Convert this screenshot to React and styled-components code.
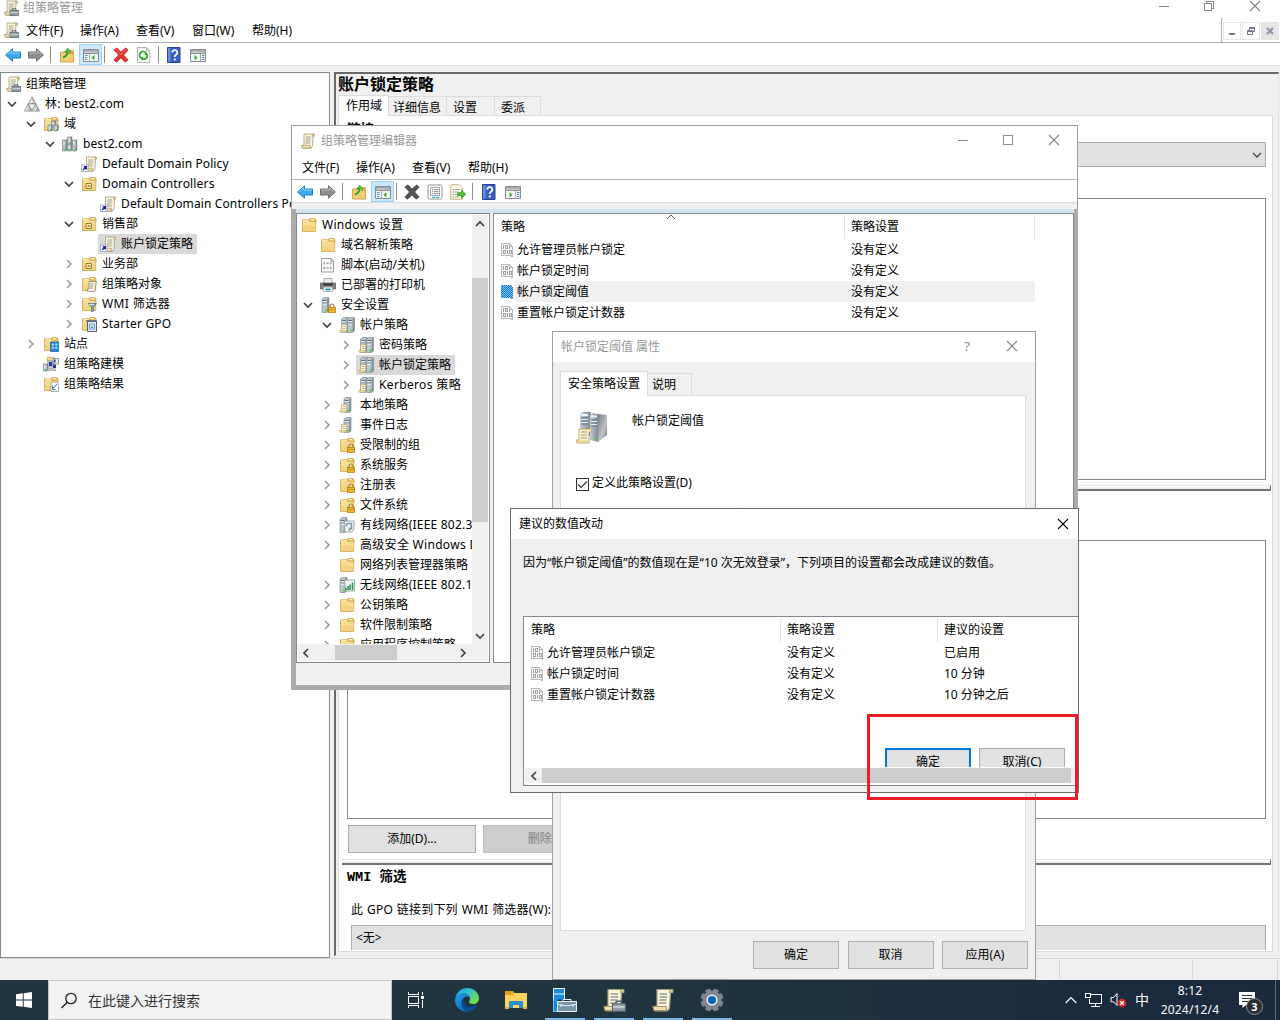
import React from "react";
import styled, { createGlobalStyle } from "styled-components";

/* ---------- icon drawings, all on a 16 x 16 grid ---------- */

const folder = (
  <>
    <path d="M7.500 3.500L9 1.500h5l1 1.200v3H7.500z" fill="#ecc266" stroke="#c99a3c" strokeWidth=".7" />
    <path d="M10 2.700h3" stroke="#fff8e0" strokeWidth="1.200" />
    <path d="M1.500 2.800h6.300l1.200 1.500h5.700v10.200H1.500z" fill="#f7dd93" stroke="#d2a548" strokeWidth=".8" />
    <path d="M2 9h12.200v5H2z" fill="#f1cf78" opacity=".7" />
    <path d="M2 3.600h5.600" stroke="#fff3c8" strokeWidth=".8" />
  </>
);

const scroll = (
  <>
    <path d="M4 1h9.500l-.5 2.500-.7 10-1.300 1.700H3V12h1z" fill="#fcf6dc" stroke="#a89c7c" strokeWidth=".8" />
    <path d="M1.300 12.300h8.700l.5 2.700H2z" fill="#efe0ae" stroke="#a3956e" strokeWidth=".7" />
    <path d="M12.500 1h2.200v2.200h-2.500z" fill="#dcc68a" stroke="#a3956e" strokeWidth=".5" />
    <path d="M5.800 4h5M5.800 6h5M5.500 8h4.800M5.300 10h5" stroke="#97978f" strokeWidth=".9" />
  </>
);

const tower = (x, y, h) => (
  <g key={`${x}-${y}`}>
    <path d={`M${x} ${y + 1}h3.500v${h - 1}h-3.500z`} fill="#b4bec6" stroke="#6c7780" strokeWidth=".6" />
    <path d={`M${x + 3.5} ${y + 1}l1.200-1v${h - 1}l-1.200 1z`} fill="#7b868f" />
    <path d={`M${x + 0.5} ${y + 3}h2.500M${x + 0.5} ${y + 5}h2.500`} stroke="#f3f8fb" strokeWidth=".9" />
    <rect x={x + 2} y={y + h - 2} width="1.500" height="1.500" fill="#43d12f" />
  </g>
);

const bigServer = (x) => (
  <>
    <path d={`M${x} 2l2-1.500h5v13.500l-2 1.500h-5z`} fill="#bac4cb" stroke="#7a858d" strokeWidth=".6" />
    <path d={`M${x + 5} 2l2-1.500v13.500l-2 1.500z`} fill="#89949c" />
    <path d={`M${x + 0.8} 3.500h3.700M${x + 0.8} 6h3.700`} stroke="#50636f" strokeWidth=".9" />
    <path d={`M${x + 0.8} 4.700h3.700M${x + 0.8} 7.200h3.700`} stroke="#f6fafc" strokeWidth="1" />
    <rect x={x + 3.2} y="12.700" width="1.800" height="1.800" fill="#49cf28" />
  </>
);

const smallScroll = (
  <>
    <path d="M2.500 7.500h5.500l-.5 7.500H1.500v-2h1z" fill="#fdf5d8" stroke="#b5a16c" strokeWidth=".7" />
    <path d="M3.700 9.500h2.800M3.700 11.500h2.800" stroke="#a8a08a" strokeWidth=".8" />
    <path d="M.8 13.500h6V15.300H.8z" fill="#ecd595" stroke="#b5a16c" strokeWidth=".4" />
  </>
);

const lock = (
  <>
    <path d="M10 10.500V9a2 2 0 0 1 4 0v1.500" fill="none" stroke="#9c8240" strokeWidth="1.200" />
    <rect x="8.500" y="10.300" width="7" height="5.200" fill="#efb429" stroke="#ab7a10" strokeWidth=".7" />
    <path d="M9 12.500h6" stroke="#b98519" strokeWidth=".7" />
  </>
);

const arrow = (
  <path d="M.6 8L7.500 1.800V5h8v6h-8v3.200z" strokeWidth="1" />
);

const briefcase = (
  <>
    <path d="M9.500 10.200V8.800h3.500v1.400" fill="none" stroke="#555f6b" />
    <path d="M7 10.500h8.600v5H7z" fill="#929ca6" stroke="#56606a" strokeWidth=".7" />
    <path d="M7.300 12.600h8" stroke="#d8dee5" strokeWidth=".9" />
  </>
);

const consoleWindow = (
  <>
    <path d="M.5 2.500h15v12H.5z" fill="#f5f7f8" stroke="#858b91" />
    <path d="M1 3h14v2.500H1z" fill="#8f969d" />
    <path d="M1.500 4.200h9" stroke="#c9ced3" />
    <path d="M11.500 4h1M13.500 4h1" stroke="#fff" />
    <path d="M1 6.500h14" stroke="#8c9298" />
  </>
);

const glyphs = {
  folder,
  scroll,
  gpm: (
    <>
      {scroll}
      {briefcase}
    </>
  ),
  forest: (
    <>
      <path d="M8 .8l3.700 6.700H4.300z" fill="#d3d5d6" stroke="#777" strokeWidth=".8" />
      <path d="M4.200 8l3.700 7H.4zM11.800 8l3.700 7H8.200z" fill="#bfc2c2" stroke="#777" strokeWidth=".8" />
      <path d="M4.700 8h6.600L8 14z" fill="#f5f5f5" stroke="#888" strokeWidth=".6" />
      <path d="M8 1v6.500H4.300zM4.200 8v7H.4zM11.800 8v7H8.200z" fill="#fff" opacity=".45" />
    </>
  ),
  folderServers: (
    <>
      {folder}
      {tower(8.5, 4, 7)}
      {tower(5, 8, 7)}
      {tower(11, 8, 7)}
    </>
  ),
  domain: (
    <>
      {tower(5.5, 0, 9)}
      {tower(0.5, 3, 12)}
      {tower(10.5, 3, 12)}
      {tower(5.5, 7, 8)}
    </>
  ),
  gpoLink: (
    <>
      <g transform="translate(1.500 0)">{scroll}</g>
      <rect x=".5" y="9" width="6.500" height="6.500" fill="#fff" stroke="#9b9bbf" strokeWidth=".8" />
      <path d="M2 14l3-3M2.700 10.800H5.300V13.400" fill="none" stroke="#20209b" strokeWidth="1.400" />
    </>
  ),
  ou: (
    <>
      {folder}
      <path d="M5 7.500h5.500v5H5z" fill="#fff2c2" stroke="#a37c25" />
      <path d="M6.500 10h3" stroke="#a37c25" strokeWidth="1.500" />
    </>
  ),
  folderScroll: (
    <>
      {folder}
      <path d="M8 5.500h7.300L14 14.500l-1 1H6.500V13H8z" fill="#fcf5db" stroke="#928568" strokeWidth=".8" />
      <path d="M9 8h3.500M9 10h3.500M9 12h3" stroke="#8d8d86" strokeWidth=".8" />
    </>
  ),
  folderFunnel: (
    <>
      {folder}
      <path d="M7 7.500h8.500L12.600 11v4l-2 .8V11z" fill="#91a6b8" stroke="#51687b" strokeWidth=".8" />
      <path d="M8 8.300h5" stroke="#e9f2f8" />
    </>
  ),
  folderStarter: (
    <>
      {folder}
      <path d="M6.500 5.500h9v10h-9z" fill="#dcebf4" stroke="#54656f" />
      <path d="M5 4.700h10.800" stroke="#69757e" strokeWidth="1.500" />
      <path d="M8.500 8h5v5h-5z" fill="#fff" stroke="#4489b5" strokeWidth=".8" />
      <path d="M9.500 10h3M9.500 11.500h3" stroke="#397eab" strokeWidth=".8" />
    </>
  ),
  folderSites: (
    <>
      {folder}
      <path d="M7.500 6h8v9.500h-8z" fill="#2583cb" stroke="#0e5c9b" strokeWidth=".7" />
      <path d="M8.700 7.500h2.300v2H8.700zM12.200 7.500h2.300v2h-2.300zM8.700 10.700h2.300v2H8.700zM12.200 10.700h2.300v2h-2.300z" fill="#a9ddff" />
    </>
  ),
  modelling: (
    <>
      <path d="M4 1.500h7v4H4z" fill="#f2d57e" stroke="#a78a3a" strokeWidth=".5" />
      {tower(0.5, 7, 8)}
      <path d="M5 5h5v6H5zM10 2.500h5.500v5.500H10z" fill="#e8ebee" stroke="#7a8187" strokeWidth=".8" />
      <path d="M6 6h3v4H6zM11 3.500h1.500v3H11zM10 8.500h3v3.500h-3z" fill="#2634a9" />
      <path d="M4 12.500h8l1 2H5z" fill="#bfc7cd" stroke="#79828a" strokeWidth=".5" />
    </>
  ),
  results: (
    <>
      {folder}
      <path d="M8 6h5.500l2 2v7.500H8z" fill="#fff" stroke="#8d989f" strokeWidth=".8" />
      <path d="M9.500 10.500v3h3M14 8l-3.500 4M9.500 9.500v2h2" stroke="#2484c8" fill="none" />
    </>
  ),
  script: (
    <>
      <path d="M1.500 1.500h9.500l2.500 2.500v11h-12z" fill="#fafafa" stroke="#9a9a9a" />
      <path d="M11 1.500v2.700h2.500" fill="none" stroke="#9a9a9a" />
      <path d="M5 5L3.500 6.200 5 7.400M5 9.800L3.500 11 5 12.200M10 5l1.500 1.200L10 7.400M10 9.800l1.500 1.200-1.500 1.200M6.300 6.200h2.500M6.300 11h2.500" fill="none" stroke="#777" strokeWidth=".9" />
    </>
  ),
  printer: (
    <>
      <path d="M4 1.500h8v5H4z" fill="#e8f0f4" stroke="#949b9e" strokeWidth=".8" />
      <path d="M.5 6h15v6H.5z" fill="#85898b" stroke="#5a5e60" strokeWidth=".8" />
      <path d="M3 7.500h10" stroke="#303436" strokeWidth="2" />
      <path d="M3.500 10h9v4.500h-9z" fill="#eef5f6" stroke="#929b9f" strokeWidth=".7" />
      <path d="M5.500 12.500h5" stroke="#2496ac" strokeWidth="2" />
    </>
  ),
  serverLock: (
    <>
      {bigServer(2)}
      {lock}
    </>
  ),
  servers: (
    <>
      {bigServer(2.5)}
      {bigServer(8.5)}
      {smallScroll}
    </>
  ),
  server: (
    <>
      {bigServer(5)}
      {smallScroll}
    </>
  ),
  folderLock: (
    <>
      {folder}
      {lock}
    </>
  ),
  wired: (
    <>
      {bigServer(1)}
      <path d="M5.500 4h10l-1 9-1.500 2H6z" fill="#f4f7f9" stroke="#87939d" strokeWidth=".8" />
      <path d="M7.500 6.500h5v5h-2V14M7.500 6.500v3" fill="none" stroke="#7b96a9" strokeWidth="1.500" />
    </>
  ),
  wireless: (
    <>
      {bigServer(1)}
      <path d="M5.500 3h10v11h-9z" fill="#eff5f1" stroke="#8b9692" strokeWidth=".8" />
      <path d="M7 13v-2M9 13v-4M11 13V7.500M13.500 13V5.500" stroke="#229251" strokeWidth="1.500" />
    </>
  ),
  binary: (
    <g shapeRendering="crispEdges">
      <path d="M1.500 1.500h8l3 3v10h-1v-1h-10z" fill="#fafafa" stroke="#b8b8b8" />
      <path d="M9.500 1.500v3h3" fill="none" stroke="#b8b8b8" />
      <path d="M3.500 3v4M5.500 3.500h2v3h-2zM3.500 8.500h2v3h-2zM7.500 8v4M9.500 8.500h2v3h-2zM9.500 5v2" fill="none" stroke="#a0a0a0" />
    </g>
  ),
  binarySelected: (
    <g shapeRendering="crispEdges">
      <defs>
        <pattern id="dither" width="2" height="2" patternUnits="userSpaceOnUse">
          <rect width="2" height="2" fill="#0b77cf" />
          <rect width="1" height="1" fill="#86c1ee" />
          <rect x="1" y="1" width="1" height="1" fill="#86c1ee" />
        </pattern>
      </defs>
      <path d="M1 1h9l3 3v11h-2l-1-1H1z" fill="url(#dither)" />
    </g>
  ),
  back: (
    <g fill="#3cabed" stroke="#1f83c4">
      {arrow}
      <path d="M2.600 7.500L6.500 4v2h8" stroke="#8dd5fc" fill="none" />
    </g>
  ),
  forward: (
    <g transform="translate(16 0) scale(-1 1)" fill="#8f8f8f" stroke="#6c6c6c">
      {arrow}
      <path d="M2.600 7.500L6.500 4v2h8" stroke="#bdbdbd" fill="none" />
    </g>
  ),
  folderUp: (
    <>
      <path d="M1.500 5h6l1 1.500h6v8.500h-13z" fill="#f0ce76" stroke="#c9973d" strokeWidth=".8" />
      <path d="M10.500 3.500h4v3h-4z" fill="#e3b65a" stroke="#c9973d" strokeWidth=".6" />
      <path d="M3.800 10.500c3.500-1 4.700-3.500 4.700-6" fill="none" stroke="#37a528" strokeWidth="2" />
      <path d="M5.500 5L8.800 1.200 12 5z" fill="#50c337" stroke="#2f8f21" strokeWidth=".6" />
    </>
  ),
  treeWindow: (
    <>
      {consoleWindow}
      <path d="M6.500 7v7.500" stroke="#aaa" />
      <path d="M2 8.500h2.500M2 10.500h2.500M2 12.500h2.500" stroke="#4894ca" />
      <path d="M11.500 8v5.500L8.300 10.700z" fill="#45ad32" />
    </>
  ),
  actionWindow: (
    <>
      {consoleWindow}
      <path d="M10.500 7v7.500" stroke="#aaa" />
      <path d="M12 8.500h2.500M12 10.500h2.500M12 12.500h2.500" stroke="#4894ca" />
      <path d="M4.500 8v5.500l3.200-2.800z" fill="#45ad32" />
    </>
  ),
  redX: (
    <>
      <path d="M.8 3L4 .8l4 4.200L12.800.8 15.200 3l-4.500 5 4.500 5-3.200 2.300-4-4.300L3.500 15.300.8 13l4.700-5z" fill="#e03333" stroke="#b92222" strokeWidth=".6" />
      <path d="M3 2.500l5 5 4.500-5" stroke="#f27b77" fill="none" strokeWidth=".8" />
    </>
  ),
  darkX: <path d="M.8 3L4 .8l4 4.200L12.800.8 15.200 3l-4.500 5 4.500 5-3.200 2.300-4-4.300L3.500 15.300.8 13l4.700-5z" fill="#545454" stroke="#3c3c3c" strokeWidth=".6" />,
  refresh: (
    <>
      <path d="M1.500.5h9.300l3 3v12H1.500z" fill="#fafafa" stroke="#b4b4b4" />
      <path d="M10.500.5v3.300h3.300" fill="none" stroke="#b4b4b4" />
      <path d="M4.500 10.500A3.500 3.500 0 0 1 9.800 5.800M11 7.500a3.500 3.500 0 0 1-5.300 4" fill="none" stroke="#34a827" strokeWidth="1.800" />
      <path d="M9.500 4.500l2.800 3.500H8.500zM6.300 13.800L3.200 10H7z" fill="#34a827" />
    </>
  ),
  properties: (
    <>
      <rect x="1" y="1" width="14" height="14" rx="1.500" fill="#fff" stroke="#909090" />
      <path d="M3.500 3.500h9v8h-9z" fill="#f3f7fa" stroke="#9eaab3" />
      <path d="M5 5.500h1M5 7.500h1M5 9.500h1M7 5.500h4.500M7 7.500h4.500M7 9.500h4.500" stroke="#888" strokeWidth=".9" />
      <path d="M5 13.300h3M9 13.300h3" stroke="#39a8dc" strokeWidth="1.300" />
    </>
  ),
  exportList: (
    <>
      <path d="M.8.8h8.500l3 3v11.500H.8z" fill="#fff9e6" stroke="#c4b283" />
      <path d="M2.700 5.500h1M2.700 8h1M2.700 10.500h1M2.700 13h1" stroke="#555" />
      <path d="M4.700 5.500h5M4.700 8h3M4.700 10.500h2M4.700 13h4" stroke="#8ca0b2" />
      <path d="M7.500 8.700h4V6l4.300 4.200-4.300 4.200v-2.700h-4z" fill="#55c13e" stroke="#2b8c1b" strokeWidth=".7" />
    </>
  ),
  help: (
    <>
      <path d="M1.500.5h12.500v15H1.500z" fill="#3a5fc2" stroke="#24429a" />
      <path d="M2 1h2.500v14H2z" fill="#6a8de0" />
      <path d="M6.300 5.500a2.500 2.500 0 1 1 3.700 2.200q-1.300.8-1.300 2.300" fill="none" stroke="#fff" strokeWidth="1.700" />
      <rect x="7.800" y="11.500" width="1.900" height="1.900" fill="#fff" />
    </>
  ),
};

const StyledSvg = styled.svg`
  display: block;
  flex: none;
`;

function Icon({ name }) {
  return (
    <StyledSvg width="16" height="16" viewBox="0 0 16 16">
      {glyphs[name]}
    </StyledSvg>
  );
}

function Chevron({ dir, color = "#404040", width = 1.7 }) {
  const paths = {
    down: "M1 3l4 4 4-4",
    up: "M1 7l4-4 4 4",
    right: "M3 1l4 4-4 4",
    left: "M7 1L3 5l4 4",
  };
  return (
    <StyledSvg width="10" height="10" viewBox="0 0 10 10">
      <path d={paths[dir]} fill="none" stroke={color} strokeWidth={width} />
    </StyledSvg>
  );
}

function CloseMark({ color = "#888" }) {
  return (
    <StyledSvg width="12" height="12" viewBox="0 0 12 12">
      <path d="M1 1l10 10M11 1L1 11" stroke={color} strokeWidth="1.100" />
    </StyledSvg>
  );
}

function MinMark() {
  return (
    <StyledSvg width="10" height="11" viewBox="0 0 10 11" shapeRendering="crispEdges">
      <path d="M0 5.500h10" stroke="#888" />
    </StyledSvg>
  );
}

function MaxMark() {
  return (
    <StyledSvg width="10" height="10" viewBox="0 0 10 10" shapeRendering="crispEdges">
      <path d="M.5.5h9v9h-9z" fill="none" stroke="#888" />
    </StyledSvg>
  );
}

function RestoreMark() {
  return (
    <StyledSvg width="10" height="10" viewBox="0 0 10 10" shapeRendering="crispEdges">
      <path d="M.5 2.500h7v7h-7zM2.500 2.500v-2h7v7h-2" fill="none" stroke="#888" />
    </StyledSvg>
  );
}

/* ---------- data ---------- */

const mainTree = [
  { depth: 0, icon: "gpm", label: "组策略管理" },
  { depth: 1, icon: "forest", label: "林: best2.com", open: true, spacing: 0.2 },
  { depth: 2, icon: "folderServers", label: "域", open: true },
  { depth: 3, icon: "domain", label: "best2.com", open: true, spacing: 0.1 },
  { depth: 4, icon: "gpoLink", label: "Default Domain Policy", spacing: 0.1 },
  { depth: 4, icon: "ou", label: "Domain Controllers", open: true, spacing: 0.15 },
  { depth: 5, icon: "gpoLink", label: "Default Domain Controllers Policy", spacing: 0.12 },
  { depth: 4, icon: "ou", label: "销售部", open: true },
  { depth: 5, icon: "gpoLink", label: "账户锁定策略", selected: true },
  { depth: 4, icon: "ou", label: "业务部", open: false },
  { depth: 4, icon: "folderScroll", label: "组策略对象", open: false },
  { depth: 4, icon: "folderFunnel", label: "WMI 筛选器", open: false, spacing: 0.4 },
  { depth: 4, icon: "folderStarter", label: "Starter GPO", open: false, spacing: 0.2 },
  { depth: 2, icon: "folderSites", label: "站点", open: false },
  { depth: 2, icon: "modelling", label: "组策略建模" },
  { depth: 2, icon: "results", label: "组策略结果" },
];

const editorTree = [
  { depth: 0, icon: "folder", label: "Windows 设置", spacing: 0.3 },
  { depth: 1, icon: "folder", label: "域名解析策略" },
  { depth: 1, icon: "script", label: "脚本(启动/关机)" },
  { depth: 1, icon: "printer", label: "已部署的打印机" },
  { depth: 1, icon: "serverLock", label: "安全设置", open: true },
  { depth: 2, icon: "servers", label: "帐户策略", open: true },
  { depth: 3, icon: "servers", label: "密码策略", open: false },
  { depth: 3, icon: "servers", label: "帐户锁定策略", open: false, selected: true },
  { depth: 3, icon: "servers", label: "Kerberos 策略", open: false, spacing: 0.35 },
  { depth: 2, icon: "server", label: "本地策略", open: false },
  { depth: 2, icon: "server", label: "事件日志", open: false },
  { depth: 2, icon: "folderLock", label: "受限制的组", open: false },
  { depth: 2, icon: "folderLock", label: "系统服务", open: false },
  { depth: 2, icon: "folderLock", label: "注册表", open: false },
  { depth: 2, icon: "folderLock", label: "文件系统", open: false },
  { depth: 2, icon: "wired", label: "有线网络(IEEE 802.3)策略", open: false, spacing: 0.2 },
  { depth: 2, icon: "folder", label: "高级安全 Windows Defender", open: false, spacing: 0.3 },
  { depth: 2, icon: "folder", label: "网络列表管理器策略" },
  { depth: 2, icon: "wireless", label: "无线网络(IEEE 802.11)策略", open: false, spacing: 0.2 },
  { depth: 2, icon: "folder", label: "公钥策略", open: false },
  { depth: 2, icon: "folder", label: "软件限制策略", open: false },
  { depth: 2, icon: "folder", label: "应用程序控制策略", open: false },
];

const mainTools = [
  { icon: "back" },
  { icon: "forward", gap: 7 },
  { sep: true, gap: 6 },
  { icon: "folderUp", gap: 8 },
  { icon: "treeWindow", gap: 4, pressed: true },
  { sep: true, gap: 2 },
  { icon: "redX", gap: 8 },
  { icon: "refresh", gap: 7 },
  { sep: true, gap: 6 },
  { icon: "help", gap: 7 },
  { icon: "actionWindow", gap: 8 },
];

const editorTools = [
  { icon: "back" },
  { icon: "forward", gap: 7 },
  { sep: true, gap: 6 },
  { icon: "folderUp", gap: 8 },
  { icon: "treeWindow", gap: 4, pressed: true },
  { sep: true, gap: 2 },
  { icon: "darkX", gap: 7 },
  { icon: "properties", gap: 7 },
  { icon: "exportList", gap: 7 },
  { sep: true, gap: 6 },
  { icon: "help", gap: 8 },
  { icon: "actionWindow", gap: 8 },
];

const policies = [
  { name: "允许管理员帐户锁定", value: "没有定义" },
  { name: "帐户锁定时间", value: "没有定义" },
  { name: "帐户锁定阈值", value: "没有定义", selected: true },
  { name: "重置帐户锁定计数器", value: "没有定义" },
];

const suggestions = [
  { name: "允许管理员帐户锁定", value: "没有定义", next: "已启用" },
  { name: "帐户锁定时间", value: "没有定义", next: "10 分钟" },
  { name: "重置帐户锁定计数器", value: "没有定义", next: "10 分钟之后" },
];

/* ---------- shared pieces ---------- */

function Toolbar({ tools, indent }) {
  return (
    <ToolbarRow $indent={indent}>
      {tools.map((t, i) =>
        t.sep ? (
          <ToolSeparator key={i} $gap={t.gap} />
        ) : (
          <Tool key={i} $gap={t.gap} $pressed={t.pressed}>
            <Icon name={t.icon} />
          </Tool>
        )
      )}
    </ToolbarRow>
  );
}

function Tree({ items }) {
  return items.map((item) => (
    <TreeRow key={item.label} $depth={item.depth}>
      {item.open !== undefined && (
        <Toggle>
          <Chevron
            dir={item.open ? "down" : "right"}
            color={item.open ? "#404040" : "#a0a0a0"}
          />
        </Toggle>
      )}
      <TreeItem $selected={item.selected} $spacing={item.spacing}>
        <Icon name={item.icon} />
        {item.label}
      </TreeItem>
    </TreeRow>
  ));
}

function MainWindow() {
  return (
    <Main>
      <MainTitle>
        <Icon name="gpm" />
        <MainTitleText>组策略管理</MainTitleText>
        <MainControls>
          <MinMark />
          <RestoreMark />
          <CloseMark />
        </MainControls>
      </MainTitle>
      <MainMenu>
        <Icon name="gpm" />
        <MenuItems>
          <MenuItem $w={54}>文件(F)</MenuItem>
          <MenuItem $w={56}>操作(A)</MenuItem>
          <MenuItem $w={56}>查看(V)</MenuItem>
          <MenuItem $w={60}>窗口(W)</MenuItem>
          <MenuItem>帮助(H)</MenuItem>
        </MenuItems>
        <MdiButtons>
          <MdiButton>
            <StyledSvg width="8" height="8" viewBox="0 0 8 8">
              <path d="M1 7h6" stroke="#747d8e" strokeWidth="2" />
            </StyledSvg>
          </MdiButton>
          <MdiButton>
            <StyledSvg width="8" height="8" viewBox="0 0 8 8" shapeRendering="crispEdges">
              <path d="M2.500 2.500V.5h5v4h-2M.5 3.500h5v4h-5z" fill="none" stroke="#747d8e" />
              <path d="M2 1h6M0 4h6" stroke="#747d8e" strokeWidth="2" />
            </StyledSvg>
          </MdiButton>
          <MdiButton $flat>
            <StyledSvg width="8" height="8" viewBox="0 0 8 8">
              <path d="M1 1l6 6M7 1L1 7" stroke="#8d93a8" strokeWidth="2.200" />
            </StyledSvg>
          </MdiButton>
        </MdiButtons>
      </MainMenu>
      <Toolbar tools={mainTools} indent={5} />
      <MainBody>
        <MainTreePane>
          <Tree items={mainTree} />
        </MainTreePane>
        <GpoPane>
          <GpoTitle>账户锁定策略</GpoTitle>
          <TabStrip>
            <Tab $active $w={51}>作用域</Tab>
            <Tab $w={58} $pad={4}>详细信息</Tab>
            <Tab $w={48} $pad={6}>设置</Tab>
            <Tab $w={46} $pad={6}>委派</Tab>
          </TabStrip>
          <GpoPanel>
            <SectionTitle $h={26}>链接</SectionTitle>
            <Combo>
              <Chevron dir="down" width={1.3} />
            </Combo>
            <ListBox $top={31} $h={282} />
            <Splitter $top={5} />
            <ListBox $top={49} $h={279} />
            <ButtonRow>
              <Button $w={128}>添加(D)...</Button>
              <Button $w={128} $disabled>删除(R)</Button>
            </ButtonRow>
            <Splitter $top={6} />
            <SectionTitle $h={22} $mono>WMI 筛选</SectionTitle>
            <FilterLabel>此 GPO 链接到下列 WMI 筛选器(W):</FilterLabel>
            <FilterCombo>&lt;无&gt;</FilterCombo>
          </GpoPanel>
        </GpoPane>
      </MainBody>
      <StatusBar>
        <StatusCell $w={1060} />
        <StatusCell $w={133} />
        <StatusCell $w={85} />
      </StatusBar>
    </Main>
  );
}

function EditorWindow() {
  return (
    <Editor>
      <EditorTitle>
        <Icon name="scroll" />
        <EditorTitleText>组策略管理编辑器</EditorTitleText>
        <EditorControls>
          <MinMark />
          <MaxMark />
          <CloseMark />
        </EditorControls>
      </EditorTitle>
      <EditorMenu>
        <MenuItem $w={54}>文件(F)</MenuItem>
        <MenuItem $w={56}>操作(A)</MenuItem>
        <MenuItem $w={56}>查看(V)</MenuItem>
        <MenuItem>帮助(H)</MenuItem>
      </EditorMenu>
      <Toolbar tools={editorTools} indent={5} />
      <EditorGap />
      <EditorFrame>
        <EditorPanes>
          <EditorTreePane>
            <TreeClip>
              <Tree items={editorTree} />
            </TreeClip>
            <VScroll>
              <Chevron dir="up" />
              <VThumb />
              <Chevron dir="down" />
            </VScroll>
            <HScroll>
              <Chevron dir="left" />
              <HThumb />
              <Chevron dir="right" />
            </HScroll>
          </EditorTreePane>
          <EditorList>
            <ListHead $cols="351px 190px 1fr">
              <HeadCell>
                策略
                <SortMark>
                  <Chevron dir="up" color="#555" width={1} />
                </SortMark>
              </HeadCell>
              <HeadCell>策略设置</HeadCell>
            </ListHead>
            {policies.map((p) => (
              <ListRow key={p.name} $cols="351px 190px 1fr">
                <NameCell>
                  <Icon name={p.selected ? "binarySelected" : "binary"} />
                  <NameText $selected={p.selected}>{p.name}</NameText>
                </NameCell>
                <ValueCell $selected={p.selected}>{p.value}</ValueCell>
              </ListRow>
            ))}
          </EditorList>
        </EditorPanes>
      </EditorFrame>
    </Editor>
  );
}

function PropertiesDialog() {
  return (
    <Properties>
      <DialogTitle $inactive>
        帐户锁定阈值 属性
        <PropertyControls>
          <HelpMark>?</HelpMark>
          <CloseMark />
        </PropertyControls>
      </DialogTitle>
      <PropertyTabs>
        <Tab $active $tall $w={88}>安全策略设置</Tab>
        <Tab $w={44} $pad={4}>说明</Tab>
      </PropertyTabs>
      <PropertyPanel>
        <PolicyHead>
          <StyledSvg width="32" height="32" viewBox="0 0 32 32">
            <defs>
              <linearGradient id="rack" x1="0" x2="1">
                <stop offset="0" stopColor="#c4ccd4" />
                <stop offset="1" stopColor="#7f8992" />
              </linearGradient>
              <linearGradient id="side" x1="0" y1="0" x2="1" y2="1">
                <stop offset="0" stopColor="#777b80" />
                <stop offset=".6" stopColor="#bfc3c7" />
                <stop offset="1" stopColor="#6d7175" />
              </linearGradient>
            </defs>
            <path d="M4 2l3-2h8v24H4z" fill="url(#rack)" />
            <path d="M22 2l9 1v20l-9 7z" fill="url(#side)" />
            <path d="M14 3l3-2 5 1v28l-8-2z" fill="url(#rack)" />
            <path d="M5 3h7M15 4.500h6" stroke="#e9f5ff" strokeWidth="2" />
            <path d="M5 6h7M5 9h7M5 12h7M15 8h6M15 11h6M15 14h6" stroke="#5a7188" strokeWidth="1.200" />
            <path d="M5 7.500h7M5 10.500h7M15 9.500h6M15 12.500h6" stroke="#eef3f8" />
            <path d="M3 17h11l2-1-1 4h-2v11H1l-1-3h3z" fill="#fcf0c5" stroke="#b39b62" strokeWidth=".8" />
            <path d="M5 20h6M5 23h6M5 26h6" stroke="#9b9992" strokeWidth="1" />
            <path d="M.5 28.500h11v2H1z" fill="#e7cf88" />
            <rect x="19" y="26.500" width="2" height="2" fill="#4bd31d" />
          </StyledSvg>
          <PolicyName>帐户锁定阈值</PolicyName>
        </PolicyHead>
        <CheckRow>
          <CheckBox>
            <StyledSvg width="11" height="11" viewBox="0 0 11 11">
              <path d="M1 5.500l3 3 6-6" fill="none" stroke="#333" strokeWidth="1.200" />
            </StyledSvg>
          </CheckBox>
          定义此策略设置(D)
        </CheckRow>
        <LockoutLabel>在发生以下情况之后，锁定帐户:</LockoutLabel>
      </PropertyPanel>
      <PropertyButtons>
        <Button $w={86}>确定</Button>
        <Button $w={86}>取消</Button>
        <Button $w={86}>应用(A)</Button>
      </PropertyButtons>
    </Properties>
  );
}

function SuggestionDialog() {
  const cols = "257px 157px 1fr";
  return (
    <Suggestion>
      <DialogTitle>
        建议的数值改动
        <CloseMark color="#000" />
      </DialogTitle>
      <Message>
        因为“帐户锁定阈值”的数值现在是“10 次无效登录”，下列项目的设置都会改成建议的数值。
      </Message>
      <SuggestionList>
        <ListHead $cols={cols}>
          <HeadCell>策略</HeadCell>
          <HeadCell>策略设置</HeadCell>
          <HeadCell $last>建议的设置</HeadCell>
        </ListHead>
        {suggestions.map((s) => (
          <ListRow key={s.name} $cols={cols}>
            <NameCell>
              <Icon name="binary" />
              <NameText>{s.name}</NameText>
            </NameCell>
            <ValueCell>{s.value}</ValueCell>
            <ValueCell>{s.next}</ValueCell>
          </ListRow>
        ))}
        <SuggestionButtons>
          <Button $w={86} $primary>确定</Button>
          <Button $w={86}>取消(C)</Button>
        </SuggestionButtons>
        <WideScroll>
          <ScrollArrow>
            <Chevron dir="left" />
          </ScrollArrow>
          <WideThumb />
        </WideScroll>
      </SuggestionList>
    </Suggestion>
  );
}

function Taskbar() {
  return (
    <Bar>
      <StartButton>
        <StyledSvg width="16" height="16" viewBox="0 0 16 16">
          <path d="M0 2.200L6.800 1.300v6.300H0zM7.700 1.200L16 0v7.600H7.700zM0 8.500h6.800v6.300L0 13.900zM7.700 8.500H16V16l-8.300-1.200z" fill="#fff" />
        </StyledSvg>
      </StartButton>
      <Search>
        <StyledSvg width="18" height="18" viewBox="0 0 18 18">
          <circle cx="11" cy="6.500" r="5.200" fill="none" stroke="#222" strokeWidth="1.300" />
          <path d="M7.300 10.200L1.500 16" stroke="#222" strokeWidth="1.400" />
        </StyledSvg>
        在此键入进行搜索
      </Search>
      <TaskItem $w={48}>
        <StyledSvg width="18" height="18" viewBox="0 0 18 18" shapeRendering="crispEdges">
          <path d="M1.500 1v2.500h10V1M1.500 17v-2.500h10V17M1.500 5.500h10v7h-10zM15.500 1v3M15.500 9v8" fill="none" stroke="#fff" />
          <path d="M14 5h3v3h-3z" fill="#fff" />
        </StyledSvg>
      </TaskItem>
      <TaskItem $w={53}>
        <StyledSvg width="24" height="24" viewBox="0 0 24 24">
          <defs>
            <linearGradient id="edgeTop" x1="0" y1="0" x2="1" y2=".6">
              <stop offset="0" stopColor="#249ee5" />
              <stop offset=".5" stopColor="#32c2d0" />
              <stop offset="1" stopColor="#70df4c" />
            </linearGradient>
            <linearGradient id="edgeLow" x1="0" y1="0" x2="1" y2="1">
              <stop offset="0" stopColor="#1ba0e8" />
              <stop offset="1" stopColor="#0b5fb8" />
            </linearGradient>
          </defs>
          <path d="M.3 10.500C1.500 3.800 6.500 0 12 0c6.800 0 12 4.700 12 10.300 0 3.500-2.700 5.800-5.900 5.800-2.800 0-4.100-1-4.100-2 0-.8 1-1.300 1-3C15 8 12.400 5.600 8.700 5.600 5 5.600 1.800 7.800.3 10.500z" fill="url(#edgeTop)" />
          <path d="M0 12.500C.2 8.500 3.800 5.600 8.700 5.600c3.700 0 6.300 2.400 6.300 5 0-.8-1.200-2-2.900-2-3.200 0-5.400 3-5.400 6.300 0 4 2.700 7.600 6.400 8.900A12 12 0 0 1 0 12.500z" fill="url(#edgeLow)" />
          <path d="M8.800 10.400c-1.400 3.500 1.400 8.200 6.600 8.200 2.500 0 4.500-.7 6.300-1.700.5-.2.900.2.600.7A12 12 0 0 1 12.800 24C8.700 22.500 6.700 18.600 6.700 15c0-2 .7-3.500 2.100-4.600z" fill="#0a4b98" />
        </StyledSvg>
      </TaskItem>
      <TaskItem $w={46}>
        <StyledSvg width="22" height="20" viewBox="0 0 22 20">
          <path d="M0 1h8l2 2.500H0z" fill="#dc9806" />
          <path d="M0 3h22v15H0z" fill="#ffd45d" />
          <path d="M0 1h8v4H0z" fill="#e1a313" />
          <path d="M4 18v-6q0-1 1-1h12q1 0 1 1v6h-4v-3H8v3z" fill="#288ad4" />
          <path d="M0 17h4v2H0zM18 17h4v2h-4z" fill="#eab638" />
        </StyledSvg>
      </TaskItem>
      <TaskItem $w={52} $running>
        <StyledSvg width="26" height="26" viewBox="0 0 26 26">
          <path d="M1.500 1.500h11v23h-11z" fill="#168bdd" stroke="#f3f9fe" />
          <path d="M2 7h10" stroke="#f3f9fe" />
          <path d="M5.500 12.500h20v12.500h-20z" fill="#20343f" />
          <path d="M1.500 12.500h4v12h-4z" fill="#168bdd" />
          <path d="M11 14.500v-2h8v2" fill="none" stroke="#e0ebf2" />
          <path d="M5.500 14.500h19v10h-19z" fill="#7895a7" stroke="#e9f2f8" />
          <path d="M5.500 17.500q9 2.500 19 0" fill="none" stroke="#e9f2f8" />
          <path d="M9 17v3M21 17v3" stroke="#e9f2f8" />
        </StyledSvg>
      </TaskItem>
      <TaskItem $w={46} $running>
        <StyledSvg width="24" height="24" viewBox="0 0 16 16">{glyphs.gpm}</StyledSvg>
      </TaskItem>
      <TaskItem $w={52} $running>
        <StyledSvg width="24" height="24" viewBox="0 0 16 16">{glyphs.scroll}</StyledSvg>
      </TaskItem>
      <TaskItem $w={46} $running>
        <StyledSvg width="24" height="24" viewBox="0 0 24 24">
          <g fill="#7f8790">
            {[0, 45, 90, 135].map((a) => (
              <path key={a} d="M9.500.5h5l1 5h-7zM8.500 18.500h7l-1 5h-5z" transform={`rotate(${a + 22.5} 12 12)`} />
            ))}
            <circle cx="12" cy="12" r="9.300" />
          </g>
          <circle cx="12" cy="12" r="5.500" fill="#eef4f8" />
          <circle cx="12" cy="12" r="4" fill="#0763bd" />
        </StyledSvg>
      </TaskItem>
      <Tray>
        <StyledSvg width="12" height="8" viewBox="0 0 12 8">
          <path d="M.7 7L6 1.500 11.300 7" fill="none" stroke="#fff" strokeWidth="1.200" />
        </StyledSvg>
        <StyledSvg width="17" height="16" viewBox="0 0 17 16" shapeRendering="crispEdges">
          <path d="M6 2.500h10.500v9h-12M4.500 11.500v-5M10.500 11.500v3M6 14.500h9M.5 1.500h5v4h-5z" fill="none" stroke="#fff" />
        </StyledSvg>
        <StyledSvg width="17" height="16" viewBox="0 0 17 16">
          <path d="M1 5.500h2.500L7 1.500v12L3.500 9.800H1z" fill="none" stroke="#fff" />
          <circle cx="12" cy="11" r="4.300" fill="#dc2729" />
          <path d="M10.300 9.300l3.400 3.400M13.700 9.300l-3.400 3.400" stroke="#fff" strokeWidth="1.300" />
        </StyledSvg>
        <Ime>中</Ime>
        <Clock>
          <span>8:12</span>
          <span>2024/12/4</span>
        </Clock>
        <Notice>
          <StyledSvg width="16" height="16" viewBox="0 0 16 16">
            <path d="M0 0h16v13H7l-3.500 3V13H0z" fill="#fff" />
            <path d="M3 3.500h10M3 6.500h10M3 9.500h7" stroke="#1d2e3f" strokeWidth="1.100" />
          </StyledSvg>
          <Badge>3</Badge>
        </Notice>
        <ShowDesktop />
      </Tray>
    </Bar>
  );
}

export default function App() {
  return (
    <Desktop>
      <GlobalStyle />
      <MainWindow />
      <EditorWindow />
      <PropertiesDialog />
      <SuggestionDialog />
      <RedFrame />
      <Taskbar />
    </Desktop>
  );
}

/* ---------- styles ---------- */

const GlobalStyle = createGlobalStyle`
  * {
    box-sizing: border-box;
  }

  body {
    margin: 0;
    overflow: hidden;
    background: #f0f0f0;
    color: #000;
    font-family: "Noto Sans", "Noto Sans CJK SC", sans-serif;
    font-size: 12px;
    line-height: 20px;
  }
`;

const Desktop = styled.div`
  position: relative;
  width: 1280px;
  height: 1020px;
  overflow: hidden;
  white-space: nowrap;
`;

const Main = styled.div`
  display: flex;
  flex-direction: column;
  height: 980px;
  background: #f0f0f0;
`;

const MainTitle = styled.div`
  display: flex;
  align-items: center;
  height: 18px;
  padding: 0 19px 3px 3px;
  background: #fff;
`;

const MainTitleText = styled.div`
  margin-left: 4px;
  color: #999;
`;

const MainControls = styled.div`
  display: flex;
  align-items: center;
  gap: 35px;
  margin-left: auto;
  padding-bottom: 3px;
`;

const MainMenu = styled.div`
  display: flex;
  align-items: center;
  height: 25px;
  padding-left: 3px;
  background: #fff;
  border-bottom: 1px solid #b0b0b0;
`;

const MenuItems = styled.div`
  display: flex;
  margin-left: 7px;
  padding-top: 2px;
`;

const MenuItem = styled.div`
  width: ${(p) => (p.$w ? `${p.$w}px` : "auto")};
`;

const MdiButtons = styled.div`
  display: flex;
  align-items: center;
  gap: 1px;
  height: 24px;
  margin: 0 1px 0 auto;
  padding: 1px 0 0 1px;
  border-left: 1px solid #b0b0b0;
`;

const MdiButton = styled.div`
  display: flex;
  align-items: center;
  justify-content: center;
  width: 18px;
  height: 18px;
  border: 1px solid #e5e5e5;
  background: ${(p) => (p.$flat ? "#e5e5e5" : "#fff")};
`;

const ToolbarRow = styled.div`
  display: flex;
  align-items: center;
  flex: none;
  height: 23px;
  padding: 1px 0 0 ${(p) => p.$indent}px;
  background: #fff;
  border-bottom: 1px solid #dcdcdc;
`;

const Tool = styled.div`
  display: flex;
  align-items: center;
  justify-content: center;
  width: ${(p) => (p.$pressed ? 23 : 16)}px;
  height: 21px;
  margin-left: ${(p) => p.$gap || 0}px;
  border: ${(p) => (p.$pressed ? "1px solid #99d1ff" : "none")};
  background: ${(p) => (p.$pressed ? "#cce8ff" : "none")};
`;

const ToolSeparator = styled.div`
  width: 1px;
  height: 17px;
  margin-left: ${(p) => p.$gap}px;
  background: #8d8d8d;
`;

const MainBody = styled.div`
  display: flex;
  height: 892px;
  padding: 6px 1px 0 0;
`;

const MainTreePane = styled.div`
  width: 330px;
  height: 886px;
  padding-top: 1px;
  overflow: hidden;
  background: #fff;
  border: 1px solid #828790;
`;

const TreeRow = styled.div`
  display: flex;
  align-items: center;
  height: 20px;
  padding-left: ${(p) => 2 + 19 * p.$depth}px;
`;

const Toggle = styled.div`
  display: flex;
  justify-content: center;
  width: 10px;
  margin: 0 5px 0 -15px;
`;

const TreeItem = styled.div`
  display: flex;
  align-items: center;
  gap: 5px;
  height: 20px;
  padding: 0 4px 0 2px;
  letter-spacing: ${(p) => p.$spacing || 0}px;
  background: ${(p) => (p.$selected ? "#d9d9d9" : "none")};
`;

const GpoPane = styled.div`
  flex: 1;
  height: 884px;
  margin-left: 4px;
  padding: 0 5px 4px 2px;
  background: #f0f0f0;
  border: 1px solid #e3e3e3;
  border-top: 2px solid #696969;
  border-left: 2px solid #696969;
`;

const GpoTitle = styled.div`
  height: 21px;
  font-size: 16px;
  font-weight: 700;
`;

const TabStrip = styled.div`
  display: flex;
  align-items: flex-end;
  height: 20px;
`;

const Tab = styled.div`
  position: relative;
  z-index: ${(p) => (p.$active ? 1 : 0)};
  width: ${(p) => p.$w}px;
  height: ${(p) => (p.$tall ? 25 : p.$active ? 21 : 19)}px;
  margin-bottom: ${(p) => (p.$active ? -1 : 0)}px;
  padding-left: ${(p) => p.$pad || 7}px;
  line-height: ${(p) => (p.$tall ? 23 : p.$active ? 19 : 21)}px;
  background: ${(p) => (p.$active ? "#fff" : "#f0f0f0")};
  border: 1px solid #dcdcdc;
  border-bottom: none;
  border-left-width: ${(p) => (p.$active ? 1 : 0)}px;
`;

const GpoPanel = styled.div`
  display: flex;
  flex-direction: column;
  height: 837px;
  padding: 0 6px 0 8px;
  overflow: hidden;
  background: #fff;
  border: 1px solid #dcdcdc;
`;

const SectionTitle = styled.div`
  flex: none;
  height: ${(p) => p.$h}px;
  padding-top: 3px;
  font-family: ${(p) =>
    p.$mono ? '"Liberation Mono", "Noto Sans CJK SC", monospace' : "inherit"};
  font-size: 13.500px;
  font-weight: 700;
`;

const Combo = styled.div`
  display: flex;
  flex: none;
  align-items: center;
  justify-content: flex-end;
  height: 25px;
  padding-right: 3px;
  background: #e1e1e1;
  border: 1px solid #adadad;
`;

const ListBox = styled.div`
  flex: none;
  height: ${(p) => p.$h}px;
  margin-top: ${(p) => p.$top}px;
  border: 1px solid #828790;
`;

const Splitter = styled.div`
  flex: none;
  height: 6px;
  margin: ${(p) => p.$top}px -5px 0;
  background: linear-gradient(#fff 1px, #f0f0f0 1px);
  border-top: 1px solid #e3e3e3;
  border-right: 1px solid #696969;
  border-bottom: 2px solid #747474;
`;

const ButtonRow = styled.div`
  display: flex;
  gap: 7px;
  margin: 6px 0 0 1px;
`;

const Button = styled.div`
  flex: none;
  width: ${(p) => p.$w}px;
  height: 28px;
  text-align: center;
  line-height: 26px;
  color: ${(p) => (p.$disabled ? "#838383" : "#000")};
  background: ${(p) => (p.$disabled ? "#ccc" : "#e1e1e1")};
  border: 1px solid ${(p) => (p.$disabled ? "#bfbfbf" : "#adadad")};
  ${(p) => p.$primary && "border: 2px solid #0078d7; line-height: 24px;"}
`;

const FilterLabel = styled.div`
  flex: none;
  height: 38px;
  padding: 13px 0 0 4px;
  letter-spacing: 0.200px;
  word-spacing: 0.500px;
`;

const FilterCombo = styled.div`
  flex: none;
  height: 25px;
  margin-left: 4px;
  padding-left: 4px;
  line-height: 24px;
  background: #e1e1e1;
  border: 1px solid #adadad;
  border-bottom: none;
`;

const StatusBar = styled.div`
  display: flex;
  height: 22px;
  padding-top: 1px;
  border-top: 1px solid #d7d7d7;
`;

const StatusCell = styled.div`
  width: ${(p) => p.$w}px;
  height: 19px;
  border-right: 1px solid #d7d7d7;
`;

const Editor = styled.div`
  position: absolute;
  top: 125px;
  left: 291px;
  display: flex;
  flex-direction: column;
  width: 787px;
  height: 565px;
  background: #fff;
  border: 1px solid #a0a0a0;
`;

const EditorTitle = styled.div`
  display: flex;
  align-items: center;
  height: 30px;
  padding: 0 17px 0 8px;
`;

const EditorTitleText = styled.div`
  margin-left: 5px;
  color: #999;
`;

const EditorControls = styled.div`
  display: flex;
  align-items: center;
  gap: 35px;
  margin-left: auto;
  padding-bottom: 2px;
`;

const EditorMenu = styled.div`
  display: flex;
  height: 24px;
  padding: 2px 0 0 10px;
  border-bottom: 1px solid #b0b4bc;
`;

const EditorGap = styled.div`
  height: 6px;
  background: #f0f0f0;
`;

const EditorFrame = styled.div`
  flex: 1;
  margin: 0 -1px -1px;
  padding: 0 4px 5px 5px;
  background: #ababab;
`;

const EditorPanes = styled.div`
  display: flex;
  gap: 3px;
  height: 476px;
  padding: 4px 0 22px;
  background: linear-gradient(#d6e2f0 4px, #f0f0f0 4px);
`;

const EditorTreePane = styled.div`
  display: grid;
  grid-template-columns: 175px 16px;
  grid-template-rows: 430px 17px;
  width: 194px;
  height: 450px;
  overflow: hidden;
  background: #fff;
  border: 1px solid #828790;
`;

const TreeClip = styled.div`
  overflow: hidden;
  padding-top: 1px;
`;

const VScroll = styled.div`
  display: flex;
  flex-direction: column;
  align-items: center;
  margin-top: 1px;
  padding: 4px 0 3px;
  background: #f0f0f0;
`;

const VThumb = styled.div`
  width: 16px;
  height: 244px;
  margin: 49px 0 auto;
  background: #cdcdcd;
`;

const HScroll = styled.div`
  display: flex;
  grid-column: 1 / 3;
  align-items: center;
  margin-left: 1px;
  padding-left: 3px;
  background: #f0f0f0;
`;

const HThumb = styled.div`
  width: 62px;
  height: 15px;
  margin: 0 61px 0 24px;
  background: #cdcdcd;
`;

const EditorList = styled.div`
  flex: 1;
  height: 450px;
  background: #fff;
  border: 1px solid #828790;
`;

const ListHead = styled.div`
  display: grid;
  grid-template-columns: ${(p) => p.$cols};
  height: 25px;
`;

const HeadCell = styled.div`
  position: relative;
  height: 24px;
  margin-top: 1px;
  padding-left: 7px;
  line-height: 23px;
  border-right: ${(p) => (p.$last ? "none" : "1px solid #e5e5e5")};

  & + & {
    padding-left: 6px;
  }
`;

const SortMark = styled.div`
  position: absolute;
  top: -3px;
  left: 172px;
`;

const ListRow = styled.div`
  display: grid;
  grid-template-columns: ${(p) => p.$cols};
  height: 21px;
  line-height: 21px;
`;

const NameCell = styled.div`
  display: flex;
  align-items: center;
  padding-left: 6px;

  svg {
    margin-right: -1px;
  }
`;

const NameText = styled.div`
  flex: 1;
  padding-left: 2px;
  background: ${(p) => (p.$selected ? "#f0f0f0" : "none")};
`;

const ValueCell = styled.div`
  padding-left: 6px;
  background: ${(p) => (p.$selected ? "#f0f0f0" : "none")};
`;

const Properties = styled.div`
  position: absolute;
  top: 331px;
  left: 552px;
  width: 484px;
  height: 649px;
  background: #f0f0f0;
  border: 1px solid #a0a0a0;
`;

const DialogTitle = styled.div`
  display: flex;
  align-items: center;
  justify-content: space-between;
  height: 30px;
  padding: 0 9px 0 8px;
  color: ${(p) => (p.$inactive ? "#999" : "#000")};
  background: #fff;
`;

const PropertyControls = styled.div`
  display: flex;
  align-items: center;
  gap: 36px;
  padding: 0 8px 2px 0;
`;

const HelpMark = styled.div`
  font-size: 13px;
  color: #888;
`;

const PropertyTabs = styled.div`
  display: flex;
  align-items: flex-end;
  height: 33px;
  padding-left: 7px;

  ${Tab}:last-child {
    height: 22px;
    line-height: 21px;
  }
`;

const PropertyPanel = styled.div`
  height: 536px;
  margin: 0 9px 0 7px;
  padding: 16px 15px;
  overflow: hidden;
  background: #fff;
  border: 1px solid #dcdcdc;
`;

const PolicyHead = styled.div`
  display: flex;
  gap: 24px;
  height: 61px;
`;

const PolicyName = styled.div`
  margin-top: -1px;
`;

const CheckRow = styled.div`
  display: flex;
  align-items: center;
  gap: 3px;
  height: 20px;
`;

const CheckBox = styled.div`
  width: 13px;
  height: 13px;
  margin-top: 3px;
  background: #fff;
  border: 1px solid #333;
`;

const LockoutLabel = styled.div`
  margin: 12px 0 0 28px;
`;

const PropertyButtons = styled.div`
  display: flex;
  justify-content: flex-end;
  gap: 8.500px;
  padding: 10px 7px 0 0;
`;

const Suggestion = styled.div`
  position: absolute;
  top: 508px;
  left: 510px;
  width: 569px;
  height: 285px;
  overflow: hidden;
  background: #f0f0f0;
  border: 1px solid #6b6b6b;
`;

const Message = styled.div`
  height: 77px;
  padding: 14px 0 0 12px;
`;

const SuggestionList = styled.div`
  display: flex;
  flex-direction: column;
  height: 170px;
  margin-left: 12px;
  background: #fff;
  border: 1px solid #828790;
  border-right: none;
`;

const SuggestionButtons = styled.div`
  display: flex;
  justify-content: flex-end;
  gap: 8px;
  height: 19px;
  margin-top: auto;
  padding-right: 13px;
  overflow: hidden;
`;

const WideScroll = styled.div`
  display: flex;
  height: 15px;
  margin: 1px 0 2px 1px;
  background: #f0f0f0;
`;

const ScrollArrow = styled.div`
  display: flex;
  align-items: center;
  justify-content: center;
  width: 17px;
`;

const WideThumb = styled.div`
  width: 529px;
  background: #cdcdcd;
`;

const RedFrame = styled.div`
  position: absolute;
  top: 714px;
  left: 867px;
  width: 211px;
  height: 86px;
  border: 3px solid #ed1c24;
`;

const Bar = styled.div`
  position: relative;
  display: flex;
  height: 40px;
  color: #fff;
  background: linear-gradient(90deg, #1f3341, #20353f 50%, #1b2b3e 85%, #1b293f);
`;

const StartButton = styled.div`
  display: flex;
  align-items: center;
  justify-content: center;
  width: 48px;
`;

const Search = styled.div`
  display: flex;
  align-items: center;
  gap: 10px;
  width: 344px;
  padding: 2px 0 0 11px;
  font-size: 14px;
  color: #333;
  background: #f2f2f2;
  border: 1px solid #c3c3c3;
`;

const TaskItem = styled.div`
  display: flex;
  align-items: center;
  justify-content: center;
  width: ${(p) => p.$w}px;
  background: ${(p) =>
    p.$running
      ? "linear-gradient(#76b9ed, #76b9ed) center bottom / 40px 2px no-repeat"
      : "none"};
`;

const Tray = styled.div`
  display: flex;
  align-items: center;
  gap: 8px;
  margin-left: auto;
`;

const Ime = styled.div`
  width: 14px;
  font-size: 14px;
`;

const Clock = styled.div`
  display: flex;
  flex-direction: column;
  align-items: center;
  width: 66px;
  margin-right: 3px;
  line-height: 19px;
  letter-spacing: 0.150px;
`;

const Notice = styled.div`
  position: relative;
  width: 33px;
  padding-left: 5px;
`;

const Badge = styled.div`
  position: absolute;
  top: 6px;
  left: 12px;
  width: 17px;
  height: 17px;
  border: 1px solid #8b949b;
  border-radius: 50%;
  background: #2b2d31;
  font-size: 11px;
  font-weight: 700;
  line-height: 15px;
  text-align: center;
`;

const ShowDesktop = styled.div`
  width: 5px;
  height: 40px;
  border-left: 1px solid #5d6b7a;
`;
